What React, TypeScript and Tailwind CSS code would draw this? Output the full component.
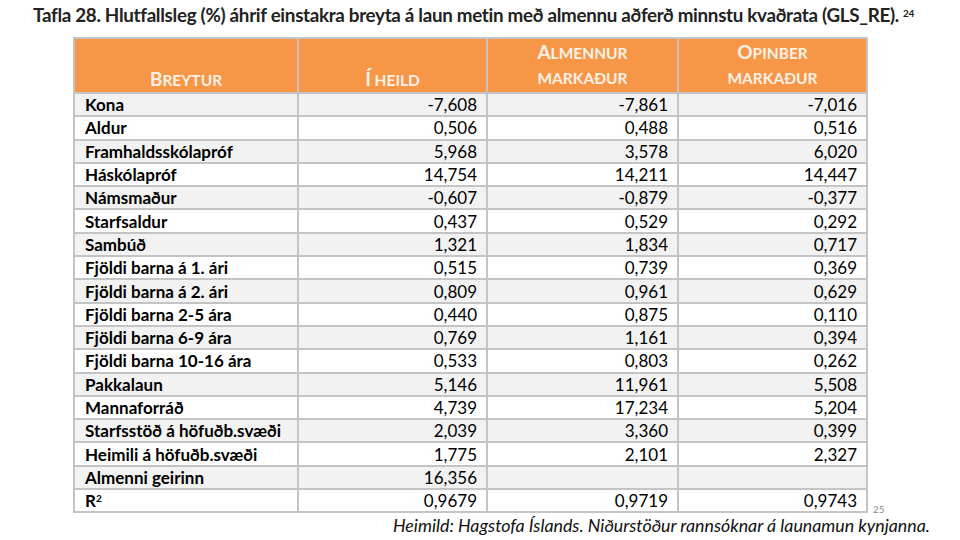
const rows: [string, string, string, string][] = [
  ['Kona', '-7,608', '-7,861', '-7,016'],
  ['Aldur', '0,506', '0,488', '0,516'],
  ['Framhaldsskólapróf', '5,968', '3,578', '6,020'],
  ['Háskólapróf', '14,754', '14,211', '14,447'],
  ['Námsmaður', '-0,607', '-0,879', '-0,377'],
  ['Starfsaldur', '0,437', '0,529', '0,292'],
  ['Sambúð', '1,321', '1,834', '0,717'],
  ['Fjöldi barna á 1. ári', '0,515', '0,739', '0,369'],
  ['Fjöldi barna á 2. ári', '0,809', '0,961', '0,629'],
  ['Fjöldi barna 2-5 ára', '0,440', '0,875', '0,110'],
  ['Fjöldi barna 6-9 ára', '0,769', '1,161', '0,394'],
  ['Fjöldi barna 10-16 ára', '0,533', '0,803', '0,262'],
  ['Pakkalaun', '5,146', '11,961', '5,508'],
  ['Mannaforráð', '4,739', '17,234', '5,204'],
  ['Starfsstöð á höfuðb.svæði', '2,039', '3,360', '0,399'],
  ['Heimili á höfuðb.svæði', '1,775', '2,101', '2,327'],
  ['Almenni geirinn', '16,356', '', ''],
];

const font = { fontFamily: 'Lato, "Open Sans", sans-serif' };

// fake small caps: big first letter, the rest upper-case and smaller
function Caps({ text }: { text: string }) {
  return (
    <div className="h-[27px] leading-[27px] overflow-visible">
      <span className="text-[19px]">{text[0]}</span>
      <span className="text-[15.5px] uppercase">{text.slice(1)}</span>
    </div>
  );
}

function Head({ top, bottom }: { top?: string; bottom: string }) {
  return (
    <th className="border-2 border-[#c4c4c4] p-0 align-bottom text-center">
      <div className="h-[53px] flex flex-col justify-end">
        {top && <Caps text={top} />}
        {top ? (
          <div className="h-[27px] leading-[27px] text-[15.5px] uppercase">{bottom}</div>
        ) : (
          <Caps text={bottom} />
        )}
      </div>
    </th>
  );
}

export default function App() {
  return (
    <div className="relative w-[960px] h-[540px] bg-white overflow-hidden text-black" style={font}>
      <h1 className="pl-[33px] pt-[3px] text-[18.8px] font-bold leading-[24px] tracking-[-0.3px] text-[#222] whitespace-nowrap">
        Tafla 28. Hlutfallsleg (%) áhrif einstakra breyta á laun metin með almennu aðferð minnstu kvaðrata (GLS_RE).
        <sup className="text-[10px] ml-[4px]">24</sup>
      </h1>

      <table className="ml-[73px] mt-[10px] w-[793px] border-collapse table-fixed text-[17px]">
        <colgroup>
          <col className="w-[224px]" />
          <col className="w-[189px]" />
          <col className="w-[191px]" />
          <col className="w-[189px]" />
        </colgroup>
        <thead>
          <tr className="bg-[#f79646] text-[#fdf1e7] font-bold">
            <Head bottom="Breytur" />
            <Head bottom="Í heild" />
            <Head top="Almennur" bottom="markaður" />
            <Head top="Opinber" bottom="markaður" />
          </tr>
        </thead>
        <tbody>
          {rows.map((r, i) => (
            <tr key={r[0]} className={`h-[23.3px] leading-[19px] ${i % 2 === 0 ? 'bg-[#f2f2f2]' : 'bg-white'}`}>
              <td className="border-2 border-[#c4c4c4] pl-[10px] font-bold">{r[0]}</td>
              <td className="border-2 border-[#c4c4c4] pr-[9px] text-right">{r[1]}</td>
              <td className="border-2 border-[#c4c4c4] pr-[9px] text-right">{r[2]}</td>
              <td className="border-2 border-[#c4c4c4] pr-[9px] text-right">{r[3]}</td>
            </tr>
          ))}
          <tr className="h-[23.3px] leading-[19px] bg-white">
            <td className="border-2 border-[#c4c4c4] pl-[10px] font-bold">
              R<sup className="text-[10px]">2</sup>
            </td>
            <td className="border-2 border-[#c4c4c4] pr-[9px] text-right">0,9679</td>
            <td className="border-2 border-[#c4c4c4] pr-[9px] text-right">0,9719</td>
            <td className="border-2 border-[#c4c4c4] pr-[9px] text-right">0,9743</td>
          </tr>
        </tbody>
      </table>

      <div className="absolute left-[873px] top-[503px] text-[10px] leading-[12px] text-[#8a8a8a]">25</div>
      <p className="absolute left-[393px] top-[514px] text-[17.8px] italic leading-[22px] text-[#111] whitespace-nowrap">
        Heimild: Hagstofa Íslands. Niðurstöður rannsóknar á launamun kynjanna.
      </p>
    </div>
  );
}
